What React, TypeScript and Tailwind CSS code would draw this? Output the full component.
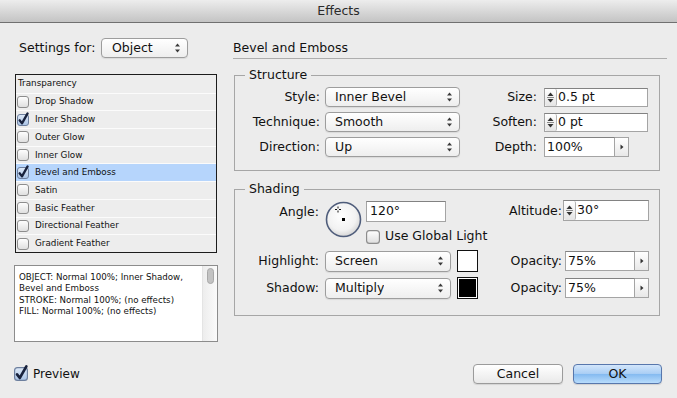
import React from "react";

function Arrows() {
  return (
    <svg width="7" height="12" viewBox="0 0 7 12" className="shrink-0">
      <path d="M3.5 1.5 L6 4.5 H1 Z" fill="#3a3a3a" />
      <path d="M3.5 10.5 L6 7.5 H1 Z" fill="#3a3a3a" />
    </svg>
  );
}

function Check({ checked, size = 12 }: { checked?: boolean; size?: number }) {
  return (
    <svg width={size} height={size} viewBox="0 0 12 12" className="shrink-0 overflow-visible">
      <defs>
        <linearGradient id="cb-off" x1="0" y1="0" x2="0" y2="1">
          <stop offset="0" stopColor="#ffffff" />
          <stop offset="1" stopColor="#dedede" />
        </linearGradient>
        <linearGradient id="cb-on" x1="0" y1="0" x2="0" y2="1">
          <stop offset="0" stopColor="#dfeaf8" />
          <stop offset="1" stopColor="#a9c3e6" />
        </linearGradient>
      </defs>
      <rect
        x="0.5"
        y="0.5"
        width="11"
        height="11"
        rx="2.5"
        fill={checked ? "url(#cb-on)" : "url(#cb-off)"}
        stroke={checked ? "#6d7f9e" : "#8d8d8d"}
      />
      {checked && (
        <path
          d="M2.6 6.3 L5 9.4 L10.6 -0.6"
          fill="none"
          stroke="#18223d"
          strokeWidth="2.3"
          strokeLinecap="round"
          strokeLinejoin="round"
        />
      )}
    </svg>
  );
}

function Select({ value, className }: { value: string; className: string }) {
  return (
    <div
      className={`flex items-center justify-between rounded-[4px] border border-[#9d9d9d] bg-gradient-to-b from-white to-[#eeeeee] shadow-[0_1px_1px_rgba(0,0,0,0.08)] pr-[6px] ${className}`}
    >
      <span className="truncate">{value}</span>
      <Arrows />
    </div>
  );
}

function SpinField({ value, className }: { value: string; className: string }) {
  return (
    <div className={`flex border border-[#a4a4a4] border-t-[#828282] bg-white ${className}`}>
      <div className="w-[12px] shrink-0 flex items-center justify-center rounded-[2px] border-r border-[#b4b4b4] bg-gradient-to-b from-white to-[#e4e4e4]">
        <svg width="9" height="15" viewBox="0 0 9 15">
          <path d="M4.5 2.5 L7.5 6 H1.5 Z" fill="#333" />
          <path d="M1 7.5 H8" stroke="#8a8a8a" strokeWidth="1" />
          <path d="M4.5 12.5 L7.5 9 H1.5 Z" fill="#333" />
        </svg>
      </div>
      <span className="pl-[1px] flex items-center">{value}</span>
    </div>
  );
}

function MenuField({ value, className, field }: { value: string; className: string; field: string }) {
  return (
    <div className={`flex h-[20px] ${className}`}>
      <div className={`${field} border border-[#a4a4a4] border-t-[#828282] bg-white pl-[2px] flex items-center`}>
        {value}
      </div>
      <div className="w-[14px] border border-l-0 border-[#a4a4a4] bg-gradient-to-b from-white to-[#e8e8e8] flex items-center justify-center">
        <svg width="4" height="6" viewBox="0 0 4 6">
          <path d="M0.5 0.5 L3.5 3 L0.5 5.5 Z" fill="#333" />
        </svg>
      </div>
    </div>
  );
}

function AngleDial() {
  return (
    <svg width="37" height="37" viewBox="0 0 37 37" className="ml-[6px] shrink-0">
      <defs>
        <radialGradient id="dial" cx="0.45" cy="0.4" r="0.6">
          <stop offset="0" stopColor="#ffffff" />
          <stop offset="0.7" stopColor="#f2f2f2" />
          <stop offset="1" stopColor="#d6d6d6" />
        </radialGradient>
      </defs>
      <circle cx="18.5" cy="18.5" r="17" fill="url(#dial)" stroke="#4f5d7b" strokeWidth="1.6" />
      <path d="M10 8.5 H12 M14 8.5 H16 M13 5.5 V7.5 M13 9.5 V11.5" stroke="#111" strokeWidth="1" />
      <rect x="17" y="17" width="3" height="3" fill="#000" />
    </svg>
  );
}

const effects = [
  { name: "Drop Shadow", on: false },
  { name: "Inner Shadow", on: true },
  { name: "Outer Glow", on: false },
  { name: "Inner Glow", on: false },
  { name: "Bevel and Emboss", on: true, sel: true },
  { name: "Satin", on: false },
  { name: "Basic Feather", on: false },
  { name: "Directional Feather", on: false },
  { name: "Gradient Feather", on: false },
];

export default function App() {
  return (
    <div className="w-[677px] h-[398px] overflow-hidden bg-[#ececec] font-['DejaVu_Sans',sans-serif] text-[12.5px] text-[#111] flex flex-col">
      <div className="h-[23px] shrink-0 border-b border-[#707070] bg-gradient-to-b from-[#ededed] to-[#c4c4c4] flex items-center justify-center text-[#2a2a2a]">
        Effects
      </div>

      <div className="h-[319px] shrink-0 flex items-start">
        {/* left column */}
        <div className="ml-[14px] w-[204px] pt-[15px] flex flex-col">
          <div className="h-[20px] flex items-center">
            <span className="w-[87px] pl-[5px]">Settings for:</span>
            <Select value="Object" className="w-[87px] h-[20px] pl-[10px]" />
          </div>

          <div className="mt-[16px] ml-[1px] w-[202px] border border-[#1c1c1c] bg-[#ededed] text-[8.8px]">
            <div className="h-[17.7px] pl-[2px] flex items-center">Transparency</div>
            {effects.map((e) => (
              <div
                key={e.name}
                className={`h-[17.7px] pl-[1px] flex items-center border-t border-[#fbfbfb] ${e.sel ? "bg-[#b6d5fc]" : ""}`}
              >
                <Check checked={e.on} />
                <span className="ml-[6px]">{e.name}</span>
              </div>
            ))}
          </div>

          <div className="mt-[12px] h-[77px] border border-[#8c8c8c] bg-white flex">
            <div className="flex-1 pl-[4px] pt-[6px] text-[8.7px] leading-[11.4px] whitespace-nowrap">
              <div>OBJECT: Normal 100%; Inner Shadow,</div>
              <div>Bevel and Emboss</div>
              <div>STROKE: Normal 100%; (no effects)</div>
              <div>FILL: Normal 100%; (no effects)</div>
            </div>
            <div className="w-[15px] border-l border-[#e4e4e4] bg-gradient-to-r from-[#ededed] to-[#fbfbfb] flex justify-center pt-[2px]">
              <div className="w-[7px] h-[16px] rounded-full border border-[#a8a8a8] bg-[#c3c3c3]" />
            </div>
          </div>
        </div>

        {/* right column */}
        <div className="ml-[15px] w-[434px] pt-[17px] flex flex-col">
          <div className="leading-[16px]">Bevel and Emboss</div>
          <div className="mt-[2px] h-[1px] bg-[#adadad]" />

          <fieldset className="mt-[8px] ml-[1px] w-[426px] border border-[#a6a6a6] pb-[13px]">
            <legend className="ml-[10px] px-[4px] leading-[16px]">Structure</legend>
            <div className="pt-[4px] flex flex-col gap-[5px]">
              <div className="h-[20px] flex items-center">
                <span className="w-[85px] text-right">Style:</span>
                <Select value="Inner Bevel" className="ml-[5px] w-[135px] h-[20px] pl-[9px]" />
                <span className="w-[77px] text-right">Size:</span>
                <SpinField value="0.5 pt" className="ml-[7px] w-[104px] h-[19px]" />
              </div>
              <div className="h-[20px] flex items-center">
                <span className="w-[85px] text-right">Technique:</span>
                <Select value="Smooth" className="ml-[5px] w-[135px] h-[20px] pl-[9px]" />
                <span className="w-[77px] text-right">Soften:</span>
                <SpinField value="0 pt" className="ml-[7px] w-[104px] h-[19px]" />
              </div>
              <div className="h-[20px] flex items-center">
                <span className="w-[85px] text-right">Direction:</span>
                <Select value="Up" className="ml-[5px] w-[135px] h-[20px] pl-[9px]" />
                <span className="w-[77px] text-right">Depth:</span>
                <MenuField value="100%" className="ml-[7px]" field="w-[71px]" />
              </div>
            </div>
          </fieldset>

          <fieldset className="mt-[10px] ml-[1px] w-[426px] border border-[#a6a6a6] pb-[16px]">
            <legend className="ml-[10px] px-[4px] leading-[16px]">Shading</legend>
            <div className="pt-[4px] flex flex-col">
              <div className="flex items-start">
                <span className="w-[84px] text-right leading-[21px]">Angle:</span>
                <AngleDial />
                <div className="ml-[4px] w-[120px] shrink-0 flex flex-col">
                  <div className="w-[80px] h-[21px] border border-[#a4a4a4] border-t-[#828282] bg-white pl-[3px] flex items-center">
                    120°
                  </div>
                  <div className="mt-[7px] h-[15px] flex items-center whitespace-nowrap">
                    <Check size={14} />
                    <span className="ml-[5px]">Use Global Light</span>
                  </div>
                </div>
                <span className="w-[76px] shrink-0 text-right leading-[21px] -mt-[1px]">Altitude:</span>
                <SpinField value="30°" className="ml-[1px] w-[86px] h-[21px] -mt-[1px]" />
              </div>

              <div className="mt-[6px] h-[22px] flex items-center">
                <span className="w-[84px] text-right">Highlight:</span>
                <Select value="Screen" className="ml-[6px] w-[126px] h-[21px] pl-[9px]" />
                <div className="ml-[6px] w-[21px] h-[22px] border border-[#111] bg-white" />
                <span className="w-[84px] text-right">Opacity:</span>
                <MenuField value="75%" className="ml-[3px]" field="w-[70px]" />
              </div>

              <div className="mt-[5px] h-[22px] flex items-center">
                <span className="w-[84px] text-right">Shadow:</span>
                <Select value="Multiply" className="ml-[6px] w-[126px] h-[21px] pl-[9px]" />
                <div className="ml-[6px] w-[21px] h-[22px] border border-[#111] bg-white p-[1px]">
                  <div className="w-full h-full bg-black" />
                </div>
                <span className="w-[84px] text-right">Opacity:</span>
                <MenuField value="75%" className="ml-[3px]" field="w-[70px]" />
              </div>
            </div>
          </fieldset>
        </div>
      </div>

      <div className="mt-[22px] h-[20px] pl-[14px] pr-[15px] flex items-center justify-between">
        <div className="flex items-center">
          <Check checked size={14} />
          <span className="ml-[5px] text-[12px]">Preview</span>
        </div>
        <div className="flex items-center gap-[10px]">
          <button className="w-[90px] h-[20px] rounded-[4px] border border-[#9b9b9b] bg-gradient-to-b from-white to-[#e9e9e9] shadow-[0_1px_1px_rgba(0,0,0,0.1)]">
            Cancel
          </button>
          <button className="w-[89px] h-[20px] rounded-[4px] border border-[#5877ac] bg-[linear-gradient(#d3e6fb,#a8cdf4_50%,#84baf0_51%,#b8dcfc)] shadow-[0_1px_1px_rgba(0,0,0,0.12)]">
            OK
          </button>
        </div>
      </div>
    </div>
  );
}
